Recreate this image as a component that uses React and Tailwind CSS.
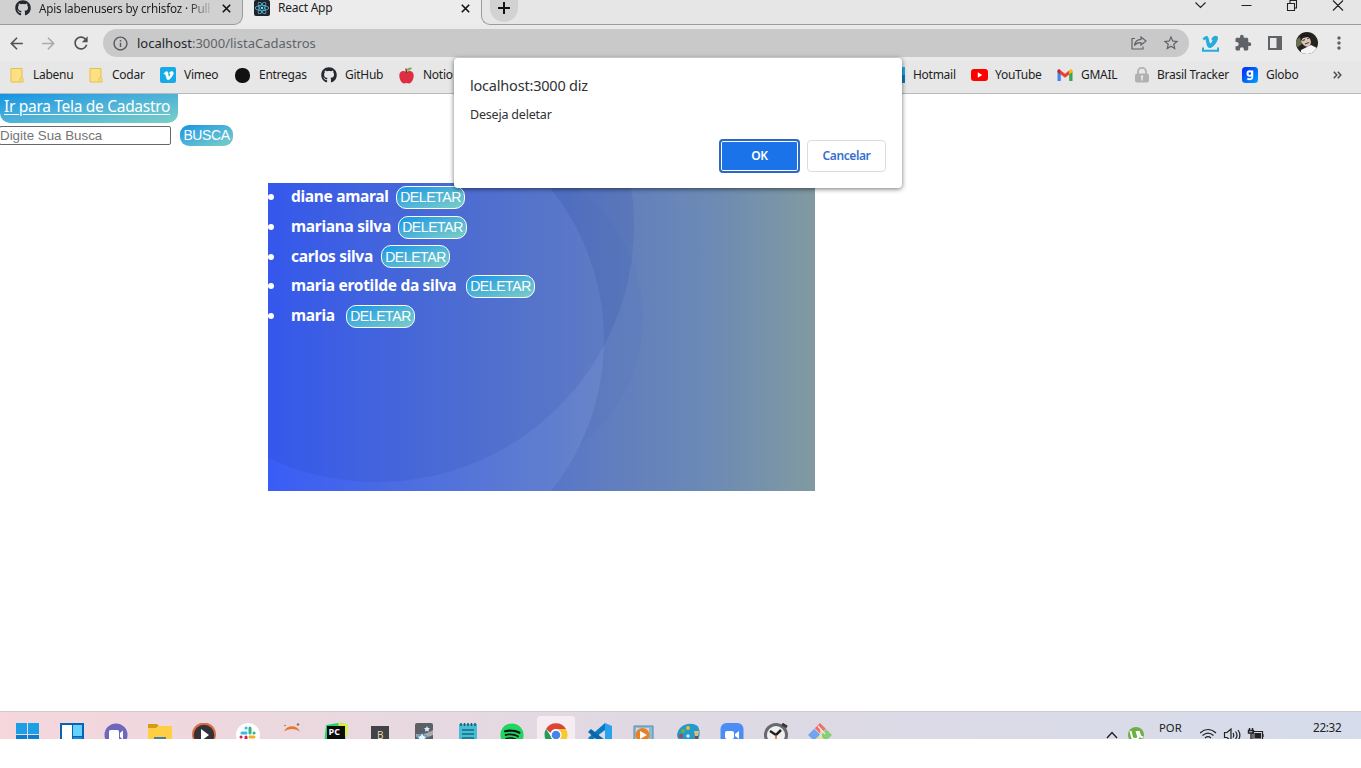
import React from 'react';
import { FaGithub, FaReact, FaVimeoV, FaSpotify } from 'react-icons/fa';
import { MdArrowBack, MdArrowForward, MdRefresh, MdInfoOutline, MdStarBorder, MdExtension, MdMoreVert } from 'react-icons/md';

const Folder = () => (
  <svg width="14" height="16" viewBox="0 0 14 16">
    <path d="M1 1.5h11v9l1 1V15H1z" fill="#fde083" stroke="#e3bf4c" />
    <path d="M10 14.5v-3l2-1" fill="none" stroke="#e3bf4c" />
  </svg>
);

const VimeoTile = () => (
  <span className="flex size-4 items-center justify-center rounded-xs bg-[#16abe6] text-white">
    <FaVimeoV size={11} stroke="#fff" strokeWidth={22} />
  </span>
);

const Apple = () => (
  <svg width="15" height="17" viewBox="0 0 15 17">
    <path d="M7.5 5C4 2.8.3 4.300.3 8.500c0 4 2.500 8 4.700 8 1 0 1.500-.4 2.500-.4s1.500.4 2.500.4c2.200 0 4.700-4 4.700-8C14.700 4.300 11 2.800 7.500 5z" fill="#dd2e44" />
    <path d="M7.500 5.500 7 1.500" stroke="#662113" strokeWidth="1.200" />
    <path d="M7.500 3.500C8 1 10 .3 13 .5 12.500 3 10 4.200 7.500 3.500z" fill="#77b255" />
  </svg>
);

const YouTube = () => (
  <svg width="17" height="12" viewBox="0 0 17 12">
    <rect width="17" height="12" rx="3" fill="#f00" />
    <path d="M6.800 3.300v5.400L11.300 6z" fill="#fff" />
  </svg>
);

const Gmail = () => (
  <svg width="16" height="12" viewBox="0 0 16 12">
    <path d="M.5 2v10h3.300V4.500z" fill="#4285f4" />
    <path d="M15.500 2v10h-3.300V4.500z" fill="#34a853" />
    <path d="M3.500 1.300 8 4.700l4.500-3.400v4L8 8.700 3.500 5.300z" fill="#ea4335" />
    <path d="M.5 1.800C.5 0 2.300-.2 3.600 1v4.400L.5 3z" fill="#c5221f" />
    <path d="M15.500 1.800c0-1.800-1.800-2-3.100-.8v4.400L15.500 3z" fill="#fbbc04" />
  </svg>
);

const Lock = () => (
  <svg width="14" height="16" viewBox="0 0 14 16">
    <path d="M3 8V4.800a4 4 0 0 1 8 0V8" fill="none" stroke="#b5b5b5" strokeWidth="2" />
    <rect y="6.500" width="14" height="9" rx="2" fill="#b1b1b1" />
    <path d="M7 8.500v5M5.800 9.500h2.400" stroke="#ececec" strokeWidth="1.400" />
  </svg>
);

const Globo = () => (
  <svg width="16" height="16" viewBox="0 0 16 16">
    <defs>
      <linearGradient id="globo" x2="1" y2="1">
        <stop offset="0" stopColor="#0528f5" />
        <stop offset="1" stopColor="#00a2ff" />
      </linearGradient>
    </defs>
    <rect width="16" height="16" rx="3.500" fill="url(#globo)" />
    <circle cx="7.800" cy="6.600" r="2.300" fill="none" stroke="#fff" strokeWidth="1.900" />
    <path d="M10.300 3.500v6.700c0 2.200-3.300 2.600-5 1.200" fill="none" stroke="#fff" strokeWidth="1.900" />
  </svg>
);

const bookmarks = [
  { label: 'Labenu', icon: <Folder />, slot: 'w-[79px]', pad: 'w-[23px]' },
  { label: 'Codar', icon: <Folder />, slot: 'w-[71px]', pad: 'w-[23px]' },
  { label: 'Vimeo', icon: <VimeoTile />, slot: 'w-[75px]', pad: 'w-[24px]' },
  { label: 'Entregas', icon: <span className="size-[15px] rounded-[7px] bg-[#111]" />, slot: 'w-[86px]', pad: 'w-[24px]' },
  { label: 'GitHub', icon: <FaGithub size={16} color="#24292f" />, slot: 'w-[78px]', pad: 'w-[24px]' },
  { label: 'Notio', icon: <Apple />, slot: 'w-[490px]', pad: 'w-[24px]' },
  { label: 'Hotmail', icon: <span className="size-4 bg-linear-to-b from-[#28a8ea] from-50% to-[#1279bd] to-50%" />, slot: 'w-[82px]', pad: 'w-[24px]' },
  { label: 'YouTube', icon: <YouTube />, slot: 'w-[86px]', pad: 'w-[24px]' },
  { label: 'GMAIL', icon: <Gmail />, slot: 'w-[78px]', pad: 'w-[24px]' },
  { label: 'Brasil Tracker', icon: <Lock />, slot: 'w-[107px]', pad: 'w-[22px]' },
  { label: 'Globo', icon: <Globo />, slot: 'w-[85px]', pad: 'w-[24px]' },
];

const Cross = () => (
  <svg width="9" height="9" viewBox="0 0 9 9">
    <path d="m.8.8 7.400 7.400m0-7.400L.8 8.200" stroke="#111" strokeWidth="1.600" />
  </svg>
);

function TabStrip() {
  return (
    <div className="flex h-[25px] items-start bg-[#ececec] text-[12px] leading-4 tracking-[-0.25px] text-[#1e1e1e]">
      <div className="flex h-[25px] w-[243px] items-start rounded-br-[9px] border-r border-b border-[#9b9b9b] bg-[#d1d1d1]">
        <FaGithub size={16} color="#24292f" className="ml-[15px] shrink-0" />
        <span className="ml-2 w-[173px] overflow-hidden bg-linear-to-r from-[#1e1e1e] from-86% to-[#1e1e1e]/10 bg-clip-text text-[11.700px] tracking-[-0.2px] whitespace-nowrap text-transparent">
          Apis labenusers by crhisfoz · Pull
        </span>
        <span className="mt-1 ml-[10px]"><Cross /></span>
      </div>
      <div className="flex w-[238px] items-start">
        <span className="ml-[11px] flex size-4 items-center justify-center rounded-xs bg-[#20232a]">
          <FaReact size={14} color="#61dafb" />
        </span>
        <span className="ml-2 w-[183px]">React App</span>
        <span className="mt-1"><Cross /></span>
      </div>
      <div className="flex h-[25px] flex-1 items-start rounded-bl-[9px] border-b border-l border-[#9b9b9b] bg-[#e6e6e6]">
        <span className="ml-2 flex h-[22px] w-7 items-start justify-center rounded-b-[14px] bg-[#d2d2d2]">
          <svg width="12" height="12" viewBox="0 0 12 12" className="mt-[2px]">
            <path d="M6 0v12M0 6h12" stroke="#111" strokeWidth="2" />
          </svg>
        </span>
        <svg width="150" height="13" viewBox="0 0 150 13" className="mr-[17px] ml-auto" fill="none" stroke="#222" strokeWidth="1.100">
          <path d="m1.500 2.500 5 5 5-5M47.500 5.500h10M93.500 3.500h7v7h-7zM96 3.500v-3h6.500V8h-2M139 .5l10 10m0-10-10 10" />
        </svg>
      </div>
    </div>
  );
}

function Toolbar() {
  return (
    <div className="flex h-[36px] items-center bg-[#eaeaea] text-[#5f6368]">
      <MdArrowBack size={19} className="ml-[7px]" color="#4f5256" />
      <MdArrowForward size={19} className="ml-[13px]" color="#aaaaab" />
      <MdRefresh size={20} className="ml-[13px]" color="#4f5256" />
      <div className="ml-3 flex h-7 w-[1086px] items-center rounded-full bg-[#c9c9ca]">
        <MdInfoOutline size={17} className="ml-[9px]" color="#55585c" />
        <span className="mt-px ml-2 text-[13px] tracking-[0px] text-[#606367]">
          <span className="text-[#25272a]">localhost</span>:3000/listaCadastros
        </span>
        <svg width="16" height="14" viewBox="0 0 16 14" className="ml-auto" fill="none" stroke="#606367" strokeWidth="1.200">
          <path d="M4 2.500H1V13h11v-2.500M10 1l5 4-5 4V6.700C7 6.500 5 7.500 3.500 9.500 4 6 6.500 3.500 10 3.300z" />
        </svg>
        <MdStarBorder size={18} className="mr-[9px] ml-[15px]" />
      </div>
      <svg width="17" height="17" viewBox="0 0 17 17" className="ml-[13px]" fill="none" stroke="#25acde">
        <path d="M.5 3.500C2.500 1.500 5.500-.8 6.500 3l1.200 4.500c.5 1.500 1.200 1 2.300-1 1-1.700.6-2.400-1-1.800C10.500.5 16-.8 16 3c0 3.500-5 10-8 10C4.500 13 4.600 8 3.600 5c-.3-.7-.9-.4-1.800.2z" fill="#25acde" stroke="none" />
        <path d="M1 12.500v3.300h15v-3.300" strokeWidth="2" />
      </svg>
      <MdExtension size={18} className="ml-[15px]" />
      <svg width="14" height="14" viewBox="0 0 14 14" className="ml-[16px]">
        <path d="M0 0h14v14H0zM2 2v10h6.500V2z" fill="#606367" fillRule="evenodd" />
      </svg>
      <svg width="22" height="22" viewBox="0 0 22 22" className="ml-[14px]">
        <clipPath id="avatar"><circle cx="11" cy="11" r="11" /></clipPath>
        <g clipPath="url(#avatar)">
          <path d="M0 0h22v22H0z" fill="#25241f" />
          <path d="M0 8 4 5l3 6-5 4-2-1z" fill="#66704f" />
          <ellipse cx="10" cy="9" rx="4.500" ry="6" fill="#d9c6bb" transform="rotate(-30 10 9)" />
          <path d="M4 5c1-5 8-6 11-1l-1 2-2-1-5 1-2 3z" fill="#201b1a" />
          <path d="M6.500 8.800 9 7.500m2-.8 2-.7M9 12l4-1.500" stroke="#574139" strokeWidth="1.200" />
          <path d="m5 18 6-3 4-2 6 3v6H5z" fill="#f5f3f4" />
        </g>
      </svg>
      <MdMoreVert size={20} className="ml-[11px]" />
    </div>
  );
}

function BookmarksBar() {
  return (
    <div className="flex h-[33px] items-start border-b border-[#b8b9bb] bg-[#e7e7e7] pl-[10px] text-[12px] tracking-[-0.27px] text-[#1e1e1e]">
      {bookmarks.map((b) => (
        <div key={b.label} className={`flex h-[28px] shrink-0 items-center ${b.slot}`}>
          <span className={`flex shrink-0 ${b.pad}`}>{b.icon}</span>
          <span className="whitespace-nowrap">{b.label}</span>
        </div>
      ))}
      <svg width="9" height="8" viewBox="0 0 9 8" className="mt-[10px] ml-[6px]" fill="none" stroke="#4b4d50" strokeWidth="1.500">
        <path d="m.8.8 3 3.200-3 3.200m4-6.400 3 3.200-3 3.200" />
      </svg>
    </div>
  );
}

const people = [
  { name: 'diane amaral', width: 'w-[105px]' },
  { name: 'mariana silva', width: 'w-[107px]' },
  { name: 'carlos silva', width: 'w-[90px]' },
  { name: 'maria erotilde da silva', width: 'w-[175px]' },
  { name: 'maria', width: 'w-[55px]' },
];

function UserList() {
  return (
    <section className="relative mt-[37px] ml-[268px] h-[308px] w-[547px] overflow-hidden">
      <svg className="absolute inset-0" width="547" height="308" viewBox="0 0 547 308">
        <defs>
          <linearGradient id="card">
            <stop offset="0" stopColor="#2a4ff6" />
            <stop offset=".3" stopColor="#4466d8" />
            <stop offset=".62" stopColor="#607dc0" />
            <stop offset=".82" stopColor="#6d8bb3" />
            <stop offset="1" stopColor="#819aa1" />
          </linearGradient>
          <mask id="outside">
            <path d="M0 0h547v308H0z" fill="#fff" />
            <circle cx="94" cy="157" r="242" fill="#000" />
          </mask>
        </defs>
        <path d="M0 0h547v308H0z" fill="url(#card)" />
        <circle cx="215" cy="135" r="160" fill="#203a90" fillOpacity=".03" mask="url(#outside)" />
        <circle cx="94" cy="157" r="242" fill="#a0b8ff" fillOpacity=".13" />
        <circle cx="109" cy="42" r="257" fill="#1838a8" fillOpacity=".12" />
      </svg>
      <ul className="relative -top-px">
        {people.map((p) => (
          <li key={p.name} className="flex h-[29.7px] items-center text-[15.500px] font-bold text-white">
            <span className="mt-px mr-[17px] size-[6px] rounded-full bg-white" />
            <span className={`shrink-0 tracking-[-0.3px] whitespace-nowrap ${p.width}`}>{p.name}</span>
            <button className="mt-px h-[23px] w-[69px] rounded-[10px] border border-white bg-linear-to-br from-[#0894e5] to-[#7bcfc5] font-['Liberation_Sans',Arial,sans-serif] text-[14px] leading-none font-normal tracking-[-0.4px]">
              DELETAR
            </button>
          </li>
        ))}
      </ul>
    </section>
  );
}

function Page() {
  return (
    <main className="h-[617px] bg-white">
      <div className="h-[29px] w-[178px] rounded-b-[10px] bg-linear-to-br from-[#0894e5] to-[#7bcfc5] pl-1">
        <a className="text-[15.500px] leading-[23px] tracking-[-0.3px] whitespace-nowrap text-white underline underline-offset-2">Ir para Tela de Cadastro</a>
      </div>
      <div className="mt-[2px] flex h-[21px] items-center font-['Liberation_Sans',Arial,sans-serif]">
        <input
          placeholder="Digite Sua Busca"
          className="-ml-px h-[19px] w-[172px] rounded-xs border border-[#686868] bg-white text-[13.333px] placeholder:text-[#757575]"
        />
        <button className="ml-[9px] h-[21px] w-[53px] rounded-[9px] bg-linear-to-br from-[#0894e5] to-[#7bcfc5] pb-px text-[14px] leading-none tracking-[-0.4px] text-white">
          BUSCA
        </button>
      </div>
      <UserList />
    </main>
  );
}

function Dialog() {
  return (
    <div role="alertdialog" className="absolute top-[58px] left-[454px] flex h-[130px] w-[448px] flex-col rounded-[4px] bg-white px-4 shadow-[0_1px_5px_rgba(0,0,0,0.55)]">
      <h2 className="mt-[16px] text-[14.500px] leading-[22px] tracking-[-0.2px] text-[#303236]">localhost:3000 diz</h2>
      <p className="mt-[10px] text-[12.500px] leading-[18px] tracking-[-0.2px] text-[#303134]">Deseja deletar</p>
      <div className="mt-[15px] flex items-center justify-end gap-[7px] text-[12px] font-semibold">
        <button className="h-[34px] w-[81px] rounded-[4px] border-2 border-[#2d69c4] bg-[#1a73e8] tracking-[-0.4px] text-white inset-ring inset-ring-white">OK</button>
        <button className="h-[32px] w-[79px] rounded-[4px] border border-[#dadce0] bg-white tracking-[-0.4px] text-[#346fce]">Cancelar</button>
      </div>
    </div>
  );
}

const apps = [
  ['start', <><path d="M0 0h11v11H0zm12 0h11v11H12z" fill="#1c9fe5" /><path d="M0 12h11v11H0zm12 0h11v11H12z" fill="#087fd2" /></>],
  ['widgets', <><path d="M0 0h24v24H0z" fill="#0863b4" /><path d="M2 2h10v20H2z" fill="#fff" /><path d="M13 2h9v11h-9z" fill="#66d3ff" /><path d="M13 14h9v9h-9z" fill="#1689dc" /></>],
  ['chat', <><circle cx="12" cy="12" r="11.500" fill="#6d68bd" /><rect x="5" y="7" width="10" height="10" rx="1.500" fill="#fff" /><path d="m16 10 3-2.500v9L16 14z" fill="#fff" /></>],
  ['explorer', <><path d="M0 1h9l2 2h13v20H0z" fill="#d39a18" /><path d="M0 5h8l2-2h14v20H0z" fill="#ffce42" /><path d="M6 14h12v8H6z" fill="#497eac" /></>],
  ['media', <><circle cx="12" cy="11.500" r="12" fill="#d97045" /><circle cx="12" cy="12" r="10.300" fill="#343237" /><path d="M9 6v12l8-6z" fill="#fff" /></>],
  ['slack', <><circle cx="12" cy="12" r="12" fill="#fff" /><g fill="none" strokeWidth="3" strokeLinecap="round"><path d="M6 10h4M10 5h.1" stroke="#36bdea" /><path d="M14 5v5M18 10h.1" stroke="#2eb67d" /><path d="M10 14v4M5 14h.1" stroke="#d91c58" /><path d="M14 14h4" stroke="#ecb22e" /></g></>],
  ['jupyter', <><path d="M4 8.500c3-7 13-7 16 0-5-3.500-11-3.500-16 0z" fill="#e87831" /><path d="M4 16c4 3 12 3 16 0-3 6-13 6-16 0z" fill="#e87831" /><circle cx="18" cy="1.500" r="1.200" fill="#777" /><circle cx="5" cy="2.500" r=".8" fill="#777" /></>],
  ['pycharm', <><path d="M2 2 14 0l8 1-1 20H0z" fill="#21d969" /><path d="m14 0 10 1-1 13-6-4z" fill="#d6f140" /><path d="M3 3h18v18H3z" fill="#0b0b0b" /><text x="4.500" y="12" fontSize="9" fontWeight="700" fill="#fff">PC</text></>],
  ['bracket', <><path d="M3 3h18v20H3z" fill="#424247" /><text x="9" y="15.500" fontSize="10" fill="#f1dfbc">B</text></>],
  ['gallery', <><rect x="3" width="18" height="23" rx="2" fill="#5c6065" /><path d="M4 11c8 1 12-1 17-4v5C15 15 8 16 4 14z" fill="#aaa" /><path d="m15 3 1 2 2 .2-1.500 1.500.5 2-2-1-2 1 .5-2L12 5.200l2-.2z" fill="#d5efff" /><path d="m10 10 2 3h3l-2 3 1 3-4-1-3 1v-3l-2-3h3z" fill="#eaf8ff" stroke="#348fc9" /></>],
  ['notes', <><rect x="3" y="1" width="18" height="22" fill="#45bdd7" /><path d="M5 0v3m3.500-3v3M12 0v3m3.500-3v3M19 0v3" stroke="#255767" strokeWidth="1.500" /><path d="M6 7h12M6 11h12M6 15h12" stroke="#176880" strokeWidth="1.500" /></>],
  ['spotify', <><circle cx="12" cy="12" r="11" fill="#111" /><FaSpotify size={24} color="#1ed760" /></>],
  ['chrome', <><circle cx="12" cy="12" r="11.500" fill="#fff" /><path d="M2 6a11.500 11.500 0 0 1 20 0H12a6 6 0 0 0-5.500 4z" fill="#dc4437" /><path d="M2 6a11.500 11.500 0 0 0 8 17l5-7-7-1z" fill="#249b57" /><path d="M22 6a11.500 11.500 0 0 1-12 17l6-9c1-3 0-6-3-8z" fill="#f9c934" /><circle cx="12" cy="12" r="5.500" fill="#fff" /><circle cx="12" cy="12" r="4.300" fill="#4584ef" /></>],
  ['vscode', <><path d="m17 0 7 3v18l-7 3z" fill="#27a4ed" /><path d="M17 0v7L3 18l-3-3z" fill="#087cc2" /><path d="M17 24v-7L3 6 0 9z" fill="#0867ae" /></>],
  ['player', <><path d="M2 3h19v20H2z" fill="#8ebad3" stroke="#508aac" /><path d="M4 5h13v18H4z" fill="#c9dbe5" /><circle cx="10.500" cy="12" r="7" fill="#e98124" /><path d="M8 8v8l7-4z" fill="#fff" /></>],
  ['paint', <><path d="M1 13C1 4 11-2 20 2c6 3 4 17-2 20H5z" fill="#2499cb" /><circle cx="7" cy="8" r="2" fill="#61b938" /><circle cx="5" cy="13" r="2" fill="#c73d37" /><circle cx="12" cy="5" r="2" fill="#e7bc31" /><path d="M18 8h5l-1 5h-3z" fill="#e2bd79" /><path d="M19 13h3v9h-3z" fill="#755139" /><path d="M12 11v4m-2-2h4" stroke="#fff" /></>],
  ['zoom', <><rect x=".5" width="23" height="24" rx="6" fill="#4b8cf7" /><rect x="5" y="8" width="9" height="8" rx="2" fill="#fff" /><path d="m15 11 4-3v8l-4-3z" fill="#fff" /></>],
  ['clock', <><circle cx="12" cy="12" r="12" fill="#67696d" /><circle cx="12" cy="12" r="9" fill="#eef0f2" /><path d="m6 8 6 4 5-5" fill="none" stroke="#202124" strokeWidth="2.500" /><path d="M12 12v9" stroke="#ce5c37" strokeWidth="1.500" /><path d="m18 1 5 3" stroke="#38393b" strokeWidth="3" /></>],
  ['git', <><path d="m12 0 5.800 5.800-5.200 5.200-5.800-5.800z" fill="#f06f6b" /><path d="m6.200 5.800 5.800 5.800-6.200 6.200L0 12z" fill="#72a3ef" /><path d="m18.200 6.200 5.800 5.800-6 6-5.800-5.800z" fill="#86cf76" /><path d="m12 12.500 5.500 5.500-5.500 6-6-6z" fill="#eddb83" /><path d="m10 3 7 8m-4-4v8" stroke="#eef1df" strokeWidth="1.300" /></>],
];

function Taskbar() {
  return (
    <footer className="flex h-[28px] items-start overflow-hidden border-t border-[#d2cbd2] bg-linear-to-r from-[#f5d7dc] via-[#dfd9e3] via-48% to-[#d6dceb] pl-[6px]">
      {apps.map(([name, art]) => (
        <span
          key={name}
          className={name === 'chrome'
            ? "mt-1 ml-[3px] mr-[3px] flex h-10 w-[38px] shrink-0 justify-center rounded-t-[4px] bg-[#f5edf1] pt-[7px] font-['Open_Sans',sans-serif]"
            : "flex h-10 w-11 shrink-0 justify-center pt-[11px] font-['Open_Sans',sans-serif]"}
        >
          <svg width="24" height="24" viewBox="0 0 24 24">{art}</svg>
        </span>
      ))}
      <svg width="12" height="8" viewBox="0 0 12 8" className="mt-[19px] ml-[264px] shrink-0"><path d="m1 7 5-5.500L11 7" fill="none" stroke="#222" strokeWidth="1.400" /></svg>
      <svg width="16" height="16" viewBox="0 0 16 16" className="mt-[15px] ml-[10px] shrink-0">
        <circle cx="8" cy="8" r="8" fill="#6cb043" />
        <path d="m2.500 4 1.500 6c.7 2.700 5 2.500 6.500.5L8.500 4M10.500 4l2 5.500 2.500 1" fill="none" stroke="#fff" strokeWidth="2" />
      </svg>
      <span className="mt-[8px] ml-[15px] w-[41px] shrink-0 text-[11.300px] leading-4 text-[#222]">POR</span>
      <svg width="64" height="20" viewBox="0 0 64 20" className="mt-[15px] shrink-0" fill="none" stroke="#222" strokeWidth="1.200">
        <path d="M0 6c5-4.500 11-4.500 16 0M2.500 8.500c3.500-3 7.500-3 11 0M5 11c2-1.700 4-1.700 6 0M7 13.500h2" />
        <path d="M24.500 5.500h2.500L31 2v12l-4-3.500h-2.500zM33 6c1 1.500 1 3 0 4.500M35.500 4.500c2 2.500 2 5 0 7.500M38 3c2.500 3.500 2.500 7 0 10.500" />
        <path d="M53 4.500h9.500v8H53z" /><path d="M55 6.500h5.500V11H55zM64 7v3" fill="#222" /><path d="M49.500 1v2m3-2v2M48.500 3.500h5v2.500h-5zM51 6v6.500" strokeWidth="1.400" />
      </svg>
      <span className="mt-[7px] ml-[49px] shrink-0 text-[11.700px] leading-4 tracking-[-0.3px] text-[#222]">22:32</span>
    </footer>
  );
}

export default function App() {
  return (
    <div className="relative h-[768px] w-[1361px] overflow-hidden bg-white font-['Noto_Sans','Open_Sans',sans-serif]">
      <TabStrip />
      <Toolbar />
      <BookmarksBar />
      <Page />
      <Taskbar />
      <Dialog />
    </div>
  );
}
